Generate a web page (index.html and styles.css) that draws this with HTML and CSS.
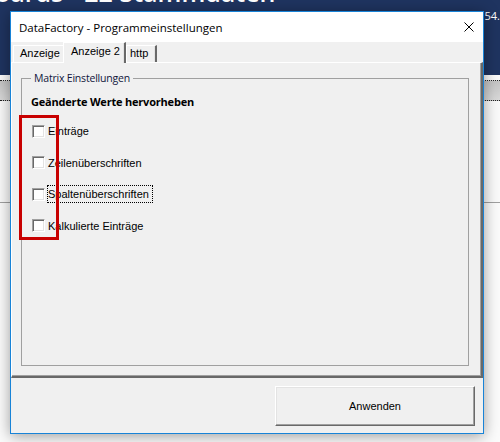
FILE: index.html
```html
<!DOCTYPE html>
<html lang="de">
<head>
<meta charset="utf-8">
<title>DataFactory - Programmeinstellungen</title>
<link rel="stylesheet" href="styles.css">
</head>
<body>
<div class="desktop">
  <div class="app-header">
    <div class="app-title">oards - 22 Stammdaten</div>
    <div class="app-version">54.</div>
  </div>
  <div class="ribbon"></div>
  <div class="sheet"></div>
</div>

<div class="dialog">
  <div class="titlebar">
    <span class="title">DataFactory - Programmeinstellungen</span>
    <svg class="close" width="10" height="10" viewBox="0 0 10 10"><path d="M0.5 0.5 L9.5 9.5 M9.5 0.5 L0.5 9.5" stroke="#000" stroke-width="1"/></svg>
  </div>
  <div class="tabs">
    <div class="tab">Anzeige</div>
    <div class="tab tab-active">Anzeige 2</div>
    <div class="tab">http</div>
  </div>
  <div class="panel">
    <fieldset class="group">
      <legend class="legend">Matrix Einstellungen</legend>
      <div class="heading">Geänderte Werte hervorheben</div>
      <div class="options">
        <div class="option"><span class="box"></span><span class="label">Einträge</span></div>
        <div class="option"><span class="box"></span><span class="label">Zeilenüberschriften</span></div>
        <div class="option"><span class="box"></span><span class="label label-focus">Spaltenüberschriften</span></div>
        <div class="option"><span class="box"></span><span class="label">Kalkulierte Einträge</span></div>
      </div>
    </fieldset>
  </div>
  <div class="footer">
    <div class="button">Anwenden</div>
  </div>
</div>

<div class="highlight"></div>
</body>
</html>
```

FILE: styles.css
```css
* { box-sizing: border-box; }
html, body { margin: 0; padding: 0; }
body {
  width: 500px;
  height: 442px;
  overflow: hidden;
  background: #fbfbfb;
  font-family: "Liberation Sans", Arial, sans-serif;
  font-size: 11px;
  color: #000;
  position: relative;
}

/* backdrop application */
.desktop { width: 500px; height: 442px; }
.app-header {
  height: 75px;
  background: #1f3460;
  display: flex;
  justify-content: space-between;
  overflow: hidden;
}
.app-title {
  color: #fff;
  font-family: "Open Sans", sans-serif;
  font-weight: 600;
  font-size: 25px;
  line-height: 25px;
  margin-top: -20.5px;
  margin-left: -5px;
  white-space: nowrap;
}
.app-version {
  color: #fff;
  font-family: "Open Sans", sans-serif;
  font-size: 11px;
  line-height: 12px;
  margin-top: 10px;
}
.ribbon {
  margin-top: 5px;
  height: 21px;
  border-top: 1px dotted #222;
  border-bottom: 1px dotted #222;
  background: linear-gradient(#c4c4c4, #d9d9d9);
}
.sheet {
  height: 102px;
  border-bottom: 1px solid #a0a0a0;
  background: #fafafa;
}

/* dialog */
.dialog {
  position: absolute;
  left: 10px;
  top: 11px;
  width: 474px;
  height: 423px;
  border: 1px solid #1883d7;
  background: #f0f0f0;
  box-shadow: 0 2px 14px rgba(0, 0, 0, 0.38);
  display: flex;
  flex-direction: column;
}
.titlebar {
  height: 30px;
  flex: none;
  background: #fff;
  display: flex;
  align-items: center;
  justify-content: space-between;
  padding: 0 9px 0 8px;
}
.title {
  font-family: "Open Sans", sans-serif;
  font-size: 11.5px;
  color: #000;
}
.close { display: block; }

.tabs {
  height: 20px;
  flex: none;
  display: flex;
  align-items: flex-end;
  padding-left: 2px;
  position: relative;
  z-index: 1;
}
.tab {
  height: 17px;
  line-height: 15px;
  padding: 0 0 0 6px;
  border-top: 1px solid #fff;
  border-left: 1px solid #fff;
  border-right: 1px solid #a0a0a0;
  box-shadow: inset -1px 0 0 #e3e3e3;
  white-space: nowrap;
}
.tab:nth-child(1) { width: 50px; border-right: none; box-shadow: none; }
.tab:nth-child(3) { width: 31px; padding-left: 3px; border-right: 2px solid #696969; }
.tab-active {
  width: 63px;
  height: 21px;
  margin-bottom: -1px;
  padding-left: 7px;
  line-height: 17px;
  background: #f0f0f0;
  border-right: 2px solid #696969;
}

.panel {
  height: 316px;
  flex: none;
  border-top: 1px solid #fff;
  border-left: 1px solid #fff;
  border-right: 2px solid #696969;
  border-bottom: 2px solid #696969;
  box-shadow: inset -1px -1px 0 #a0a0a0;
  padding: 7px 12px 10px 9px;
  display: flex;
  flex-direction: column;
}
.group {
  flex: 1;
  margin: 0;
  padding: 0 0 0 9px;
  border: 1px solid #a0a0a0;
  min-width: 0;
}
.legend {
  margin-left: 0;
  padding: 0 3px;
  font-family: "Open Sans", sans-serif;
  font-size: 10.5px;
  letter-spacing: -0.2px;
  line-height: 16px;
  color: #10163c;
}
.heading {
  margin-top: 8px;
  font-family: "Open Sans", sans-serif;
  font-weight: 700;
  font-size: 11px;
  letter-spacing: -0.2px;
  line-height: 16px;
  color: #000;
}
.options {
  margin-top: 13px;
  display: flex;
  flex-direction: column;
  gap: 15.67px;
  padding-left: 1px;
}
.option {
  height: 16px;
  display: flex;
  align-items: center;
}
.box {
  width: 13px;
  height: 13px;
  background: #fff;
  border-top: 1px solid #a0a0a0;
  border-left: 1px solid #a0a0a0;
  border-right: 1px solid #fff;
  border-bottom: 1px solid #fff;
  box-shadow: inset 1px 1px 0 #696969, inset -1px -1px 0 #e3e3e3;
  flex: none;
}
.label {
  margin-left: 3px;
  line-height: 16px;
  height: 16px;
  white-space: nowrap;
}
.label-focus {
  outline: 1px dotted #000;
  padding-right: 3px;
}

.footer {
  flex: 1;
  display: flex;
  justify-content: flex-end;
  align-items: flex-start;
  padding: 8px 8px 0 0;
}
.button {
  width: 200px;
  height: 40px;
  display: flex;
  align-items: center;
  justify-content: center;
  background: #f0f0f0;
  border-top: 1px solid #fff;
  border-left: 1px solid #fff;
  border-right: 1px solid #696969;
  border-bottom: 1px solid #696969;
  box-shadow: inset -1px -1px 0 #a0a0a0, inset 1px 1px 0 #e3e3e3;
}

.highlight {
  position: absolute;
  left: 19px;
  top: 115px;
  width: 40px;
  height: 125px;
  border: 3px solid #c80000;
}
```
